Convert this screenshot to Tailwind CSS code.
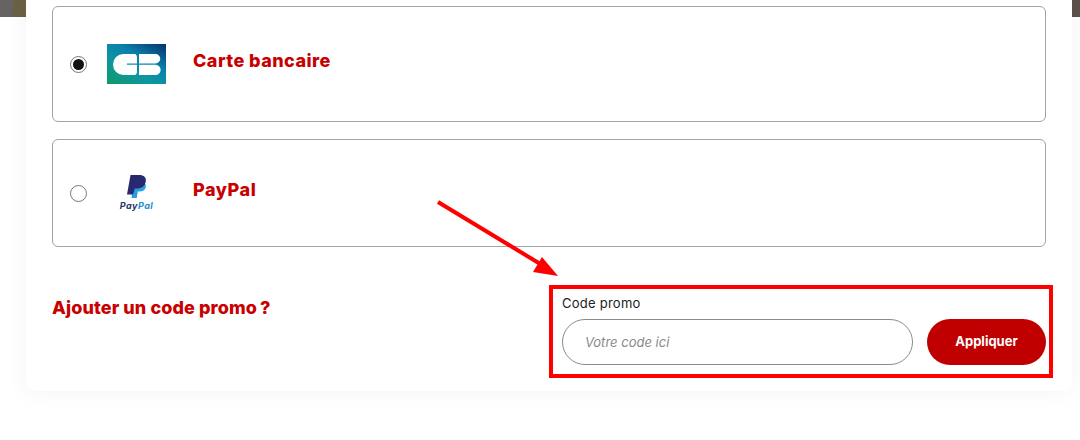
<!DOCTYPE html>
<html lang="fr">
<head>
  <meta charset="UTF-8" />
  <title>Paiement</title>
  <script src="https://cdn.jsdelivr.net/npm/@tailwindcss/browser@4"></script>
</head>
<body class="relative w-[1080px] h-[440px] overflow-hidden bg-white font-['Inter',sans-serif]">
  <!-- page header picture behind the card -->
  <div class="absolute left-0 right-0 top-0 h-[17px] flex justify-between">
    <div class="flex w-[26px]"><div class="w-[13px] bg-[#666462]"></div><div class="w-[13px] bg-[#6b6146]"></div></div>
    <div class="w-[8px] bg-[#5d5048]"></div>
  </div>

  <div class="relative ml-[26px] w-[1046px] h-[391px] bg-white rounded-br-[8px] rounded-bl-[8px] px-[26px] pt-[6px] shadow-[0_0_24px_rgba(0,0,0,0.05)]">
    <!-- CB -->
    <label class="flex items-start h-[116px] border border-[#a3a3a3] rounded-[6px]">
      <span class="mt-[49px] ml-[17px] w-[17px] h-[17px] rounded-full border border-[#767676] flex items-center justify-center">
        <span class="w-[11px] h-[11px] rounded-full bg-[#111111]"></span>
      </span>
      <svg class="mt-[37px] ml-[20px]" width="59" height="40" viewBox="0 0 59 40">
        <defs>
          <linearGradient id="cb" x1="0.1" y1="1" x2="0.9" y2="0">
            <stop offset="0" stop-color="#0f9a6c" />
            <stop offset="0.35" stop-color="#0e96a2" />
            <stop offset="0.65" stop-color="#0a80aa" />
            <stop offset="1" stop-color="#083a73" />
          </linearGradient>
        </defs>
        <rect width="59" height="40" fill="url(#cb)" />
        <path d="M28 10H16.500a10.500 10.500 0 0 0 0 21H28Q30 30.500 30 27V20.700H20V19.500H30V14Q30 10.500 28 10Z" fill="#fff" />
        <path d="M32 10H48.500a4.700 4.700 0 0 1 0 9.500H32ZM32 20.700H48.500a5.100 5.100 0 0 1 0 10.300H32Z" fill="#fff" />
      </svg>
      <span class="mt-[42px] ml-[27px] text-[18px] leading-[24px] font-extrabold text-[#c90000] tracking-[0.45px]">Carte bancaire</span>
    </label>

    <!-- PayPal -->
    <label class="flex items-start h-[108px] mt-[17px] border border-[#a3a3a3] rounded-[6px]">
      <span class="mt-[45px] ml-[17px] w-[17px] h-[17px] rounded-full border border-[#767676]"></span>
      <span class="mt-[35px] ml-[24px] w-[51px] flex flex-col items-center">
        <svg class="ml-[1px]" width="20" height="24" viewBox="0 0 20 24">
          <path d="M6 9H18.500C20 13 17 16.500 13 16.500H10.800L9.800 23H4.500Z" fill="#2a9fe0" />
          <path d="M3.500 0H12C17 0 19.500 2.500 18.800 6.500C18 11 14.500 13.500 10 13.500H7.800L6 19.500H0Z" fill="#29296f" />
        </svg>
        <span class="text-[9px] leading-[13px] font-bold italic tracking-[0.5px]"><span class="text-[#27346a]">Pay</span><span class="text-[#2790c3]">Pal</span></span>
      </span>
      <span class="mt-[38px] ml-[31px] text-[18px] leading-[24px] font-extrabold text-[#c90000] tracking-[0.6px]">PayPal</span>
    </label>

    <!-- code promo -->
    <div class="flex justify-between items-start mt-[49px]">
      <h3 class="text-[18px] leading-[24px] font-extrabold text-[#c90000] tracking-[0.1px]">Ajouter un code promo<span class="ml-[3px]">?</span></h3>
      <div class="w-[484px] -mt-[2px]">
        <label class="block text-[13px] leading-[18px] text-[#222222] tracking-[0.25px]">Code promo</label>
        <div class="flex gap-[14px] mt-[7px]">
          <input type="text" placeholder="Votre code ici" class="w-[351px] h-[46px] pl-[22px] border border-[#8a8a8a] rounded-full text-[13px] italic placeholder:text-[#8a8a8a] outline-none" />
          <button class="w-[119px] h-[46px] rounded-full bg-[#c00000] text-white text-[13px] font-bold">Appliquer</button>
        </div>
      </div>
    </div>
  </div>

  <!-- annotation drawn over the screenshot -->
  <div class="absolute left-[549px] top-[285px] w-[504px] h-[93px] border-[4px] border-[#ff0000]"></div>
  <svg class="absolute left-[430px] top-[195px]" width="135" height="85" viewBox="0 0 135 85">
    <path d="M8 7L112 70" stroke="#ff0000" stroke-width="4" />
    <path d="M128 81L103 77L112 62Z" fill="#ff0000" />
  </svg>
</body>
</html>
